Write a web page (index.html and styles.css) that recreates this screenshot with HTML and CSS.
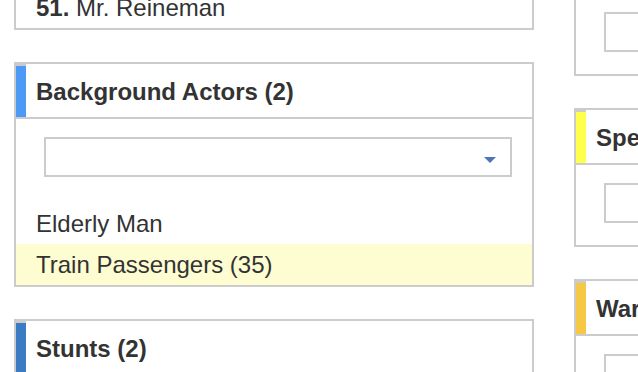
FILE: index.html
```html
<!DOCTYPE html>
<html lang="en">
<head>
    <meta charset="UTF-8">
    <meta name="viewport" content="width=device-width, initial-scale=1.0">
    <title>Breakdown</title>
    <link rel="stylesheet" href="styles.css">
</head>
<body>
    <div class="board">
        <!-- Left column -->
        <div class="column column-left">
            <div class="panel">
                <ul class="items">
                    <li><b>51.</b> Mr. Reineman</li>
                </ul>
            </div>

            <div class="panel">
                <div class="panel-head">
                    <span class="bar bar-blue"></span>
                    <h2>Background Actors (2)</h2>
                </div>
                <div class="picker"><span class="caret"></span></div>
                <ul class="items">
                    <li>Elderly Man</li>
                    <li class="active">Train Passengers (35)</li>
                </ul>
            </div>

            <div class="panel">
                <div class="panel-head">
                    <span class="bar bar-navy"></span>
                    <h2>Stunts (2)</h2>
                </div>
            </div>
        </div>

        <!-- Right column -->
        <div class="column column-right">
            <div class="panel">
                <div class="panel-head">
                    <span class="bar bar-green"></span>
                    <h2>Props</h2>
                </div>
                <div class="picker"><span class="caret"></span></div>
            </div>

            <div class="panel">
                <div class="panel-head">
                    <span class="bar bar-yellow"></span>
                    <h2>Special Effects</h2>
                </div>
                <div class="picker"><span class="caret"></span></div>
            </div>

            <div class="panel">
                <div class="panel-head">
                    <span class="bar bar-orange"></span>
                    <h2>Wardrobe</h2>
                </div>
                <div class="picker"><span class="caret"></span></div>
            </div>
        </div>
    </div>
</body>
</html>
```

FILE: styles.css
```css
html,
body {
    overflow: hidden;
}

body {
    font-family: 'Liberation Sans', Arial, sans-serif;
    background-color: #FFFFFF;
    color: #333333;
    margin: 0;
    padding: 0;
}

.board {
    display: flex;
    align-items: flex-start;
    gap: 40px;
    padding-left: 14px;
}

.column {
    flex: 0 0 520px;
    width: 520px;
}

.column-left {
    margin-top: -15px;
}

.column-right {
    margin-top: -63px;
}

.panel {
    border: 2px solid #cccccc;
    margin-bottom: 32px;
}

.panel-head {
    display: flex;
    align-items: center;
    height: 55px;
    box-sizing: border-box;
    padding-top: 2px;
    border-bottom: 2px solid #cccccc;
}

.bar {
    align-self: stretch;
    width: 10px;
    margin-top: -2px;
    border-top: 2px solid #cccccc;
}

.bar-blue { background-color: #4c9af6; }
.bar-navy { background-color: #3a7bc1; }
.bar-green { background-color: #5cb85c; }
.bar-yellow { background-color: #ffff4d; }
.bar-orange { background-color: #f5c945; }

.panel-head h2 {
    margin: 0;
    padding-left: 10px;
    font-size: 24px;
    font-weight: bold;
    line-height: 27px;
}

.picker {
    display: flex;
    align-items: center;
    justify-content: flex-end;
    height: 40px;
    box-sizing: border-box;
    margin: 18px 20px 22px 28px;
    padding-right: 14px;
    border: 2px solid #cccccc;
}

.caret {
    width: 0;
    height: 0;
    margin-top: 6px;
    border-left: 6px solid transparent;
    border-right: 6px solid transparent;
    border-top: 6px solid #4f75b9;
}

.items {
    list-style: none;
    margin: 0;
    padding: 0;
}

.picker + .items {
    margin-top: 26px;
}

.items li {
    font-size: 24px;
    line-height: 27px;
    padding: 7px 20px;
}

.items li.active {
    background-color: #fefdd1;
}
```
